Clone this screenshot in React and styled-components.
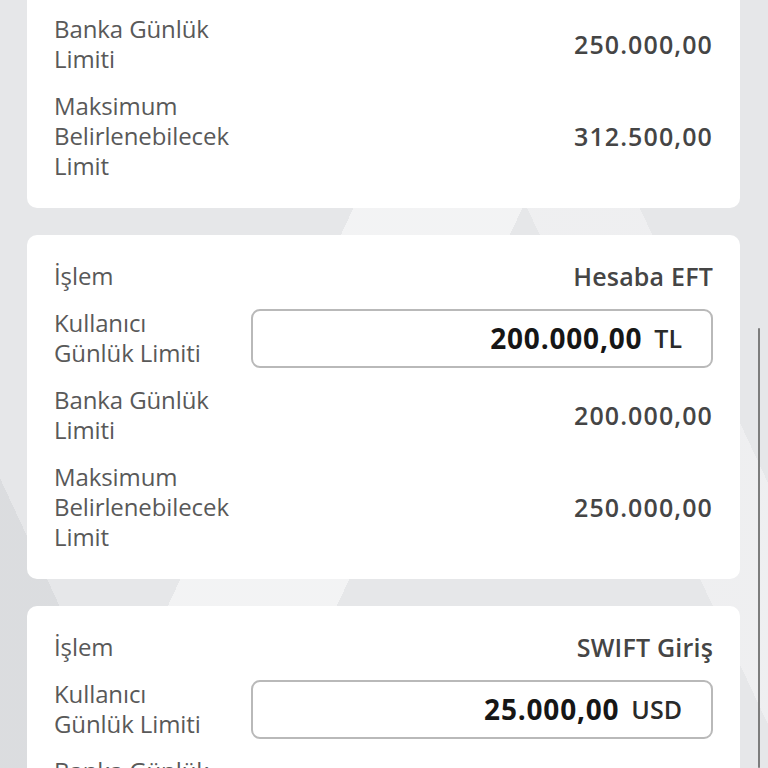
import React from "react";
import styled, { createGlobalStyle } from "styled-components";

const Global = createGlobalStyle`
  html, body { margin: 0; padding: 0; }
  body { font-family: "Open Sans", "Noto Sans", sans-serif; background: #e8e9eb; }
`;

const Screen = styled.div`
  position: relative;
  width: 768px;
  height: 768px;
  overflow: hidden;
  background:
    linear-gradient(115deg, transparent 0 40%, rgba(255,255,255,0.5) 40% 55%, transparent 55%),
    linear-gradient(65deg, rgba(210,212,215,0.55) 0 12%, transparent 12% 70%, rgba(255,255,255,0.35) 70% 80%, transparent 80%),
    #e6e7e9;
`;

const Scroller = styled.div`
  display: flex;
  flex-direction: column;
  gap: 27px;
  padding: 0 28px 0 27px;
`;

const Card = styled.section`
  background: #ffffff;
  border-radius: 10px;
  padding: ${(p) => (p.$clipped ? "45px" : "26px")} 27px 27px 27px;
  margin-top: ${(p) => (p.$clipped ? "-31px" : "0")};
  display: flex;
  flex-direction: column;
  gap: 17px;
`;

const Row = styled.div`
  display: grid;
  grid-template-columns: 180px 1fr;
  column-gap: 17px;
  align-items: center;
`;

const Label = styled.div`
  font-size: 24px;
  line-height: 30px;
  color: #595959;
  font-weight: 400;
  letter-spacing: -0.1px;
`;

const Value = styled.div`
  text-align: right;
  font-size: 25px;
  line-height: 30px;
  color: #454545;
  font-weight: 600;
  letter-spacing: ${(p) => (p.$numeric ? "1.1px" : "0.2px")};
`;

const InputBox = styled.div`
  height: 59px;
  box-sizing: border-box;
  border: 2px solid #b9b9b9;
  border-radius: 9px;
  display: flex;
  align-items: center;
  justify-content: flex-end;
  padding-right: 29px;
  gap: 12px;
  background: #fff;
`;

const Amount = styled.span`
  font-size: 28px;
  font-weight: 700;
  color: #161616;
  letter-spacing: 0.8px;
`;

const Currency = styled.span`
  font-size: 25px;
  font-weight: 600;
  color: #2a2a2a;
`;

const ScrollThumb = styled.div`
  position: absolute;
  right: 8px;
  top: 328px;
  bottom: 0;
  width: 2px;
  background: #7d7d7d;
  border-radius: 1px;
`;

function LimitRow({ label, value, numeric }) {
  return (
    <Row>
      <Label>{label}</Label>
      <Value $numeric={numeric}>{value}</Value>
    </Row>
  );
}

function InputRow({ amount, currency }) {
  return (
    <Row>
      <Label>Kullanıcı<br />Günlük Limiti</Label>
      <InputBox>
        <Amount>{amount}</Amount>
        <Currency>{currency}</Currency>
      </InputBox>
    </Row>
  );
}

const bankLabel = <>Banka Günlük<br />Limiti</>;
const maxLabel = <>Maksimum<br />Belirlenebilecek<br />Limit</>;

export default function App() {
  return (
    <>
      <Global />
      <Screen>
        <Scroller>
          <Card $clipped>
            <LimitRow label={bankLabel} value="250.000,00" numeric />
            <LimitRow label={maxLabel} value="312.500,00" numeric />
          </Card>
          <Card>
            <LimitRow label="İşlem" value="Hesaba EFT" />
            <InputRow amount="200.000,00" currency="TL" />
            <LimitRow label={bankLabel} value="200.000,00" numeric />
            <LimitRow label={maxLabel} value="250.000,00" numeric />
          </Card>
          <Card>
            <LimitRow label="İşlem" value="SWIFT Giriş" />
            <InputRow amount="25.000,00" currency="USD" />
            <LimitRow label={bankLabel} value="25.000,00" numeric />
          </Card>
        </Scroller>
        <ScrollThumb />
      </Screen>
    </>
  );
}
